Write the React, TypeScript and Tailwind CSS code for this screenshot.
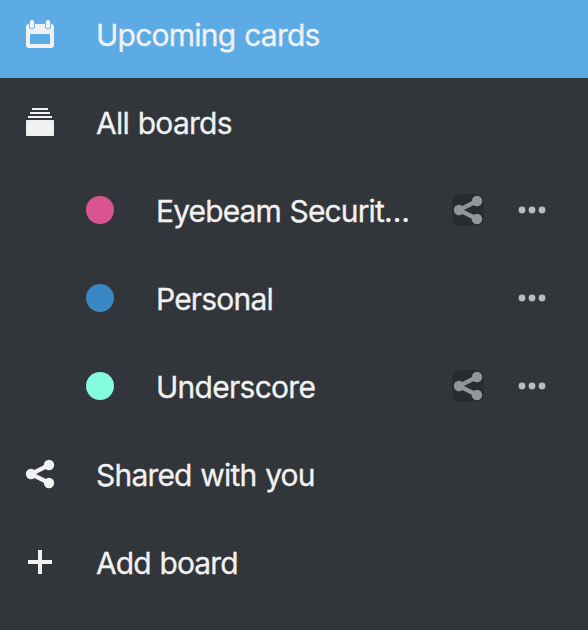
import type { ReactNode } from "react";

function CalendarIcon() {
  return (
    <svg width="32" height="32" viewBox="0 0 32 32" className="block">
      <path
        fillRule="evenodd"
        fill="#f1f1f1"
        d="M5 6H27Q30 6 30 9V27Q30 30 27 30H5Q2 30 2 27V9Q2 6 5 6ZM6 16V26H26V16Z"
      />
      <rect x="5.8" y="2" width="4.4" height="8.4" rx="2.2" fill="#f1f1f1" stroke="#5dabe4" strokeWidth="1.6" paintOrder="stroke" />
      <rect x="21.8" y="2" width="4.4" height="8.4" rx="2.2" fill="#f1f1f1" stroke="#5dabe4" strokeWidth="1.6" paintOrder="stroke" />
    </svg>
  );
}

function DeckIcon() {
  return (
    <svg width="32" height="32" viewBox="0 0 32 32" fill="#f1f1f1" className="block">
      <rect x="8" y="2" width="16" height="2" />
      <rect x="6" y="6" width="20" height="2" />
      <rect x="4" y="10" width="24" height="2" />
      <rect x="2" y="14" width="28" height="16" rx="1" />
    </svg>
  );
}

function ShareIcon() {
  return (
    <svg width="32" height="32" viewBox="0 0 32 32" fill="currentColor" className="block">
      <path d="M25 7L7 16L25 25" fill="none" stroke="currentColor" strokeWidth="4.2" />
      <circle cx="25" cy="7" r="5.2" />
      <circle cx="7" cy="16" r="5.2" />
      <circle cx="25" cy="25" r="5.2" />
    </svg>
  );
}

function PlusIcon() {
  return (
    <svg width="32" height="32" viewBox="0 0 32 32" fill="#f1f1f1" className="block">
      <path d="M14 4H18V14H28V18H18V28H14V18H4V14H14Z" />
    </svg>
  );
}

function MoreIcon() {
  return (
    <svg width="32" height="32" viewBox="0 0 32 32" fill="#babbbc" className="block">
      <circle cx="6" cy="16" r="3.4" />
      <circle cx="16" cy="16" r="3.4" />
      <circle cx="26" cy="16" r="3.4" />
    </svg>
  );
}

function Row({ icon, label, tracking, active = false }: { icon: ReactNode; label: string; tracking: string; active?: boolean }) {
  return (
    <li className={`flex h-[88px] shrink-0 items-center pl-6 ${active ? "bg-[#5dabe4]" : ""}`}>
      <span className="w-[72px]">{icon}</span>
      <span className={`whitespace-nowrap pt-px ${tracking}`}>{label}</span>
    </li>
  );
}

function Board({ color, label, tracking, shared = false }: { color: string; label: string; tracking: string; shared?: boolean }) {
  return (
    <li className="flex h-[88px] shrink-0 items-center pl-[86px] pr-10">
      <span className={`mr-[42px] size-7 rounded-full ${color}`} />
      <span className={`flex-1 whitespace-nowrap pt-px ${tracking}`}>{label}</span>
      {shared && (
        <span className="mr-8 rounded-lg bg-[#292c2f] text-[#949596]">
          <ShareIcon />
        </span>
      )}
      <MoreIcon />
    </li>
  );
}

export default function App() {
  return (
    <nav className="h-[630px] w-[588px] overflow-hidden bg-[#32353a] font-[Inter,sans-serif] text-[30px] leading-9 [-webkit-text-stroke:0.3px_#f1f1f1] [word-spacing:1px] text-[#f1f1f1]">
      <ul className="-mt-2.5 flex flex-col">
        <Row icon={<CalendarIcon />} label="Upcoming cards" tracking="tracking-[-0.75px]" active />
        <Row icon={<DeckIcon />} label="All boards" tracking="tracking-[-0.74px]" />
        <Board color="bg-[#d9548e]" label="Eyebeam Securit…" tracking="tracking-[-0.87px]" shared />
        <Board color="bg-[#3b87c3]" label="Personal" tracking="tracking-[-0.82px]" />
        <Board color="bg-[#84fadf]" label="Underscore" tracking="tracking-[-0.73px]" shared />
        <Row icon={<span className="text-[#f1f1f1]"><ShareIcon /></span>} label="Shared with you" tracking="tracking-[-0.8px]" />
        <Row icon={<PlusIcon />} label="Add board" tracking="tracking-[-0.86px]" />
      </ul>
    </nav>
  );
}
